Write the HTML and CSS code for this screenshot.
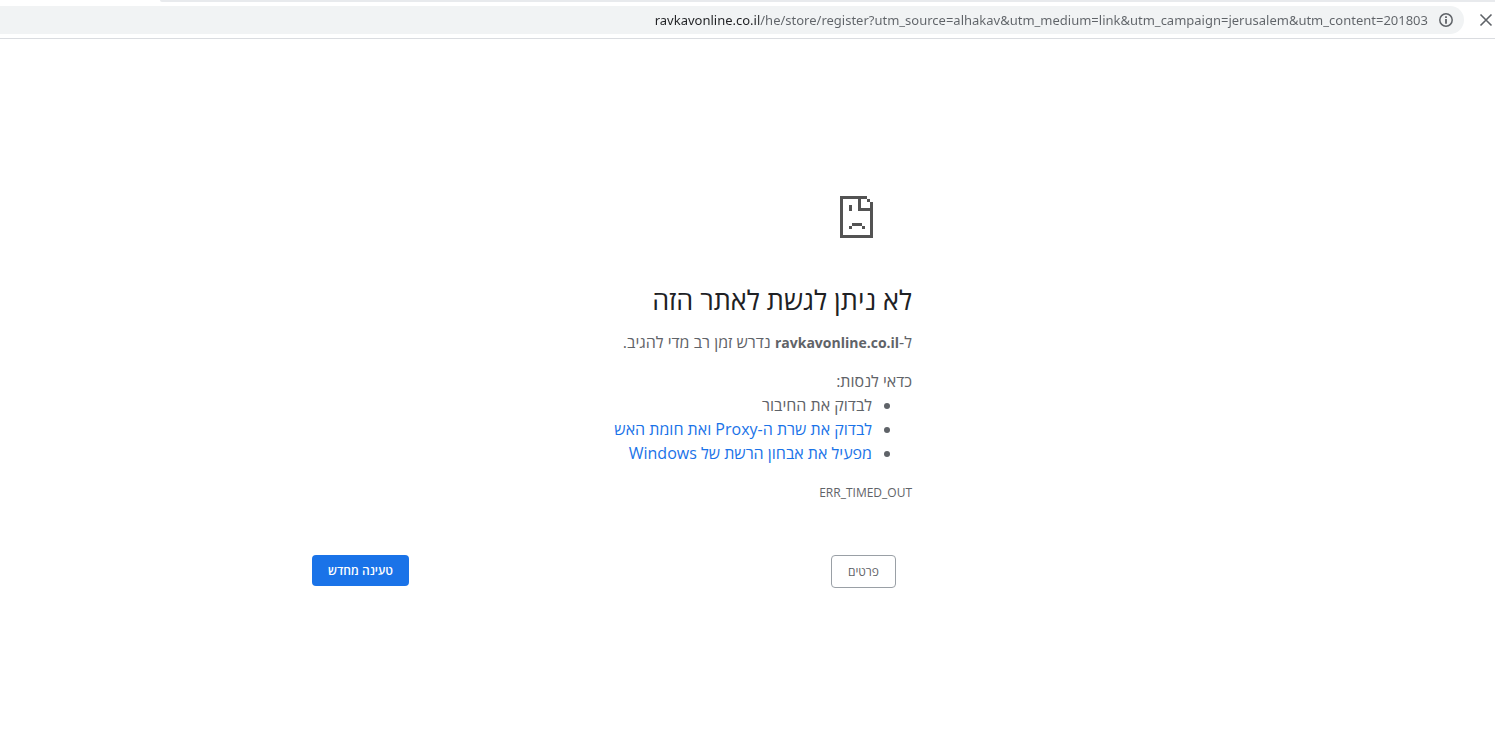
FILE: index.html
```
<!DOCTYPE html>
<html lang="he" dir="rtl">
    <head>
        <meta charset="utf-8">
        <title>ravkavonline.co.il</title>
        <link rel="stylesheet" href="styles.css">
    </head>
    <body>
        <header class="browser">
            <div class="tab-strip"></div>
            <form class="toolbar">
                <button type="button" class="icon-button" aria-label="עצירה">
                    <svg width="14" height="14" viewBox="0 0 14 14">
                        <path d="M1.5 1.5l11 11M12.5 1.5l-11 11" fill="none" stroke="#5f6368" stroke-width="1.6"/>
                    </svg>
                </button>
                <div class="omnibox">
                    <button type="button" class="icon-button" aria-label="פרטי האתר">
                        <svg width="14" height="14" viewBox="0 0 14 14">
                            <circle cx="7" cy="7" r="6.2" fill="none" stroke="#5f6368" stroke-width="1.5"/>
                            <path d="M6.1 3.2h1.8V5H6.1zM6.1 6h1.8v4.8H6.1z" fill="#5f6368"/>
                        </svg>
                    </button>
                    <input type="text" class="address" dir="ltr" aria-label="כתובת" value="ravkavonline.co.il/he/store/register?utm_source=alhakav&amp;utm_medium=link&amp;utm_campaign=jerusalem&amp;utm_content=201803">
                </div>
            </form>
        </header>

        <main class="interstitial">
            <svg class="sad-page" width="33" height="42" viewBox="0 0 33 42" shape-rendering="crispEdges" aria-hidden="true">
                <path fill="#535353" d="M0 0h27v3H0zM0 3h3v36H0zM0 39h33v3H0zM30 6h3v33h-3zM27 3h3v3h-3zM18 3h3v12h-3zM21 12h9v3h-9zM9 9h3v6H9zM12 27h10v3H12zM9 30h3v3H9zM22 30h3v3h-3z"/>
            </svg>
            <h1>לא ניתן לגשת לאתר הזה</h1>
            <p>ל-<strong>ravkavonline.co.il</strong> נדרש זמן רב מדי להגיב.</p>
            <div class="suggestions">
                <p>כדאי לנסות:</p>
                <ul>
                    <li>לבדוק את החיבור</li>
                    <li><a href="#buttons">לבדוק את שרת ה-Proxy ואת חומת האש</a></li>
                    <li><a href="#buttons">מפעיל את אבחון הרשת של Windows</a></li>
                </ul>
            </div>
            <div class="error-code">ERR_TIMED_OUT</div>
            <div class="buttons" id="buttons">
                <button type="button" class="details">פרטים</button>
                <button type="button" class="reload">טעינה מחדש</button>
            </div>
        </main>
    </body>
</html>
```
FILE: styles.css
```
:root {
    --text: #5f6368;
    --heading: #202124;
    --link: #1a73e8;
    --line: #dadce0;
}

* {
    box-sizing: border-box;
}

body {
    margin: 0;
    background: white;
    color: var(--text);
    font-family: "Open Sans", "Noto Sans", "Liberation Sans", sans-serif;
    font-size: 16px;
    line-height: 24px;
}

.browser {
    border-bottom: 1px solid var(--line);
}

.tab-strip {
    height: 2px;
    margin-left: 160px;
    background: #e8eaed;
    border-bottom-left-radius: 2px;
}

.toolbar {
    display: flex;
    align-items: center;
    gap: 15px;
    padding: 4px 2px 4px 0;
}

.icon-button {
    display: flex;
    padding: 0;
    border: none;
    background: none;
    cursor: pointer;
}

.omnibox {
    flex: 1;
    display: flex;
    align-items: center;
    gap: 11px;
    height: 28px;
    padding-right: 11px;
    background: #f1f3f4;
    border-radius: 0 14px 14px 0;
}

/* the host is dark, the rest of the address is grey */
.address {
    flex: 1;
    padding: 0;
    border: none;
    outline: none;
    background: linear-gradient(to left, var(--text) 669px, var(--heading) 669px);
    -webkit-background-clip: text;
    background-clip: text;
    color: transparent;
    font-family: "Noto Sans", sans-serif;
    font-size: 13px;
    text-align: right;
}

.interstitial {
    max-width: 600px;
    margin: 157px 583px 0 0;
}

.sad-page {
    display: block;
    margin-right: 39px;
}

h1 {
    margin: 46px 0 14px;
    color: var(--heading);
    font-size: 27px;
    font-weight: 500;
    line-height: 32px;
}

p {
    margin: 0;
}

strong {
    font-size: 14px;
}

.suggestions {
    margin-top: 14px;
}

ul {
    margin: 0;
    padding-right: 40px;
}

a {
    color: var(--link);
    text-decoration: none;
}

.error-code {
    margin-top: 16px;
    font-size: 12px;
}

.buttons {
    display: flex;
    justify-content: space-between;
    align-items: flex-start;
    margin-top: 50px;
    padding-right: 16px;
}

.buttons button {
    padding: 0 16px;
    border-radius: 4px;
    font-family: inherit;
    font-size: 12px;
    line-height: 31px;
    cursor: pointer;
}

.details {
    border: 1px solid #9aa0a6;
    background: white;
    color: var(--text);
}

.buttons .reload {
    border: none;
    background: var(--link);
    color: white;
    font-weight: 600;
}
```
